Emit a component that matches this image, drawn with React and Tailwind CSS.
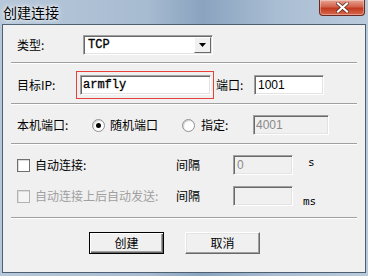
import React from "react";

const cjk = { fontFamily: '"Noto Sans CJK SC", "Liberation Sans", sans-serif' };

function Sunken({ className = "", children, disabled }) {
  return (
    <div
      className={`border border-t-[#a0a0a0] border-l-[#a0a0a0] border-r-white border-b-white shadow-[inset_1px_1px_0_#696969,inset_-1px_-1px_0_#e3e3e3] ${disabled ? "bg-[#f0f0f0]" : "bg-white"} flex items-center ${className}`}
    >
      {children}
    </div>
  );
}

function Sep() {
  return <div className="ml-[8px] w-[346px] h-[2px] border-t border-t-[#a0a0a0] border-b border-b-white" />;
}

function Check({ disabled }) {
  return (
    <div className={`w-[13px] h-[13px] border ${disabled ? "border-[#b1b1b1] bg-[#f4f4f4]" : "border-[#707070] bg-white"} shadow-[inset_1px_1px_0_#dcdcdc]`} />
  );
}

function Radio({ checked }) {
  return (
    <div className="w-[13px] h-[13px] rounded-full border border-[#8f8f8f] bg-white flex items-center justify-center shadow-[inset_1px_1px_1px_#d0d0d0]">
      {checked && <div className="w-[5px] h-[5px] rounded-full bg-black" />}
    </div>
  );
}

function Btn({ children, def }) {
  return (
    <div
      className={`w-[75px] h-[22px] flex items-center justify-center text-[12px] text-black bg-[#f0f0f0] ${def ? "border border-black shadow-[inset_1px_1px_0_#ffffff,inset_-1px_-1px_0_#696969,inset_-2px_-2px_0_#a0a0a0]" : "border border-t-white border-l-white border-r-[#696969] border-b-[#696969] shadow-[inset_-1px_-1px_0_#a0a0a0,inset_1px_1px_0_#e3e3e3]"}`}
      style={cjk}
    >
      {children}
    </div>
  );
}

export default function App() {
  return (
    <div className="w-[368px] h-[276px] bg-[linear-gradient(90deg,#b7c8da_0%,#a7bbd1_40%,#8aa3bf_55%,#a9bdd3_75%,#b9cadb_100%)] flex flex-col overflow-hidden" style={cjk}>
      {/* Title bar */}
      <div className="h-[24px] flex items-start relative">
        <div className="ml-[3px] mt-[3px] text-[14px] leading-[18px] text-black [text-shadow:0_0_6px_#ffffff,0_0_3px_#ffffff]">创建连接</div>
        <div className="absolute left-[319px] top-0 w-[46px] h-[16px] rounded-b-[4px] border border-t-0 border-[#6b2a22] bg-[linear-gradient(180deg,#e8a493_0%,#d2634b_45%,#c23a20_55%,#d8694c_100%)] flex items-center justify-center shadow-[inset_0_0_0_1px_rgba(255,255,255,0.35)]">
          <svg width="13" height="11" viewBox="0 0 13 11">
            <path d="M2 1.5 L11 9.5 M11 1.5 L2 9.5" stroke="#5a2a20" strokeWidth="3.6" strokeLinecap="square" />
            <path d="M2 1.5 L11 9.5 M11 1.5 L2 9.5" stroke="#ffffff" strokeWidth="2.2" strokeLinecap="square" />
          </svg>
        </div>
      </div>
      {/* Client */}
      <div className="ml-[2px] w-[364px] h-[249px] border border-[#4d6072] bg-[#f0f0f0] flex flex-col text-[12px] text-black">
        {/* Row 1 */}
        <div className="mt-[10px] h-[20px] flex items-center">
          <div className="ml-[14px] w-[66px] leading-[14px]">类型:</div>
          <Sunken className="w-[130px] h-[20px] justify-between">
            <span className="ml-[4px] text-[12px] [-webkit-text-stroke:0.3px_#000]" style={{ fontFamily: '"Liberation Mono", monospace' }}>TCP</span>
            <div className="w-[17px] h-[16px] mr-[1px] bg-[#f0f0f0] border border-t-white border-l-white border-r-[#696969] border-b-[#696969] flex items-center justify-center">
              <svg width="7" height="4" viewBox="0 0 7 4"><path d="M0 0 H7 L3.5 4 Z" fill="#000" /></svg>
            </div>
          </Sunken>
        </div>
        <div className="mt-[7px]"><Sep /></div>
        {/* Row 2 */}
        <div className="mt-[7px] h-[28px] flex items-center">
          <div className="ml-[14px] w-[59px] leading-[14px]">目标IP:</div>
          <div className="w-[138px] h-[28px] border border-[#e8413c] pl-[3px] pt-[3px]">
            <Sunken className="w-[131px] h-[20px]">
              <span className="ml-[2px] text-[12px] [-webkit-text-stroke:0.3px_#000]" style={{ fontFamily: '"Liberation Mono", monospace' }}>armfly</span>
            </Sunken>
          </div>
          <div className="ml-[2px] w-[38px] leading-[14px]">端口:</div>
          <Sunken className="w-[70px] h-[20px]">
            <span className="ml-[3px] text-[12px]" style={{ fontFamily: '"Liberation Sans", sans-serif' }}>1001</span>
          </Sunken>
        </div>
        <div className="mt-[4px]"><Sep /></div>
        {/* Row 3 */}
        <div className="mt-[10px] h-[20px] flex items-center">
          <div className="ml-[14px] w-[75px] leading-[14px]">本机端口:</div>
          <Radio checked />
          <div className="ml-[5px] w-[72px]">随机端口</div>
          <Radio />
          <div className="ml-[6px] w-[52px]">指定:</div>
          <Sunken disabled className="w-[76px] h-[20px]">
            <span className="ml-[2px] text-[12px] text-[#8a8a8a]" style={{ fontFamily: '"Liberation Sans", sans-serif' }}>4001</span>
          </Sunken>
        </div>
        <div className="mt-[8px]"><Sep /></div>
        {/* Row 4 */}
        <div className="mt-[10px] h-[20px] flex items-center">
          <div className="ml-[14px]"><Check /></div>
          <div className="ml-[5px] w-[141px]">自动连接:</div>
          <div className="w-[57px]">间隔</div>
          <Sunken disabled className="w-[60px] h-[20px]">
            <span className="ml-[3px] text-[12px] text-[#8a8a8a]" style={{ fontFamily: '"Liberation Sans", sans-serif' }}>0</span>
          </Sunken>
          <div className="ml-[15px] -mt-[4px] text-[11px]" style={{ fontFamily: '"DejaVu Sans Mono", monospace' }}>s</div>
        </div>
        {/* Row 5 */}
        <div className="mt-[11px] h-[20px] flex items-center">
          <div className="ml-[14px]"><Check disabled /></div>
          <div className="ml-[5px] w-[141px] text-[#a0a0a0]">自动连接上后自动发送:</div>
          <div className="w-[57px]">间隔</div>
          <Sunken disabled className="w-[60px] h-[20px]" />
          <div className="ml-[10px] mt-[12px] text-[11px] leading-[12px]" style={{ fontFamily: '"DejaVu Sans Mono", monospace' }}>ms</div>
        </div>
        <div className="mt-[11px]"><Sep /></div>
        {/* Buttons */}
        <div className="mt-[13px] flex gap-[21px] ml-[86px]">
          <Btn def>创建</Btn>
          <Btn>取消</Btn>
        </div>
      </div>
    </div>
  );
}
